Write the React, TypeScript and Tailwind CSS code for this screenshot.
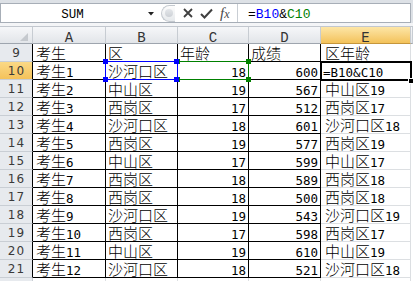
import clsx from 'clsx'

type Row = [number, string, string, string, string, string]

const rows: Row[] = [
  [9, '考生', '区', '年龄', '成绩', '区年龄'],
  [10, '考生1', '沙河口区', '18', '600', '=B10&C10'],
  [11, '考生2', '中山区', '19', '567', '中山区19'],
  [12, '考生3', '西岗区', '17', '512', '西岗区17'],
  [13, '考生4', '沙河口区', '18', '601', '沙河口区18'],
  [14, '考生5', '西岗区', '19', '577', '西岗区19'],
  [15, '考生6', '中山区', '17', '599', '中山区17'],
  [16, '考生7', '西岗区', '18', '589', '西岗区18'],
  [17, '考生8', '西岗区', '18', '500', '西岗区18'],
  [18, '考生9', '沙河口区', '19', '543', '沙河口区19'],
  [19, '考生10', '西岗区', '17', '598', '西岗区17'],
  [20, '考生11', '中山区', '19', '610', '中山区19'],
  [21, '考生12', '沙河口区', '18', '521', '沙河口区18'],
]

const CJK = /[\u3400-\u9fff]/

// chinese runs stay in the CJK font, digits/latin go mono so they are half width
function CellText({ text }: { text: string }) {
  const parts = text.match(/[\u3400-\u9fff]+|[^\u3400-\u9fff]+/g) ?? []
  return (
    <>
      {parts.map((p, i) =>
        CJK.test(p) ? (
          <span key={i} className="font-light">
            {p}
          </span>
        ) : (
          <span key={i} className="font-['DejaVu_Sans_Mono',monospace] text-[12.5px]">
            {p}
          </span>
        ),
      )}
    </>
  )
}

function FormulaBar() {
  return (
    <div className="bg-[#dde1e6]">
      <div className="h-[3px]" />
      <div className="mr-[2px] flex h-[20px] border border-[#a7aeb7] bg-white">
        <div className="relative w-[157px] shrink-0">
          <div className="w-[143px] text-center font-['Liberation_Mono',monospace] text-[12.5px] leading-[22px] text-black">
            SUM
          </div>
          <svg className="absolute left-[147px] top-[8px]" width="6" height="4" viewBox="0 0 6 4">
            <path d="M0 0h6L3 3.5z" fill="#222" />
          </svg>
        </div>
        <div className="ml-[3px] flex h-[17px] w-[14px] shrink-0 items-center justify-end self-center rounded-l-full border border-r-0 border-[#c4c9cf] bg-gradient-to-b from-[#fdfdfd] to-[#e6e9ec] pr-[2px]">
          <div className="h-[8px] w-[8px] rounded-full bg-gradient-to-b from-[#e4e7ea] to-[#cdd1d6]" />
        </div>
        <svg className="ml-[8px] self-center" width="10" height="10" viewBox="0 0 10 10">
          <path d="M1 1l8 8M9 1l-8 8" stroke="#3f3f3f" strokeWidth="1.8" />
        </svg>
        <svg className="ml-[7px] self-center" width="13" height="11" viewBox="0 0 13 11">
          <path d="M1 6l3.5 3.5L12 1.5" stroke="#3f3f3f" strokeWidth="2" fill="none" />
        </svg>
        <div className="ml-[7px] w-[17px] shrink-0 font-['Liberation_Serif',serif] text-[15px] italic leading-[19px] text-[#4a4a4a]">
          f<span className="text-[12px]">x</span>
        </div>
        <div className="w-px shrink-0 bg-[#c9ced4]" />
        <div className="flex-1 pl-[10px] font-['Liberation_Mono',monospace] text-[13px] leading-[21px] text-black">
          =<span className="text-[#0000ff]">B10</span>&amp;<span className="text-[#008000]">C10</span>
        </div>
      </div>
      <div className="h-[4px] border-b border-[#c2c7ce] bg-[#f4f5f7]" />
    </div>
  )
}

const headCell =
  "h-[17px] shrink-0 border-b border-r border-b-[#9ea5ae] border-r-[#c7ccd2] text-center font-['Liberation_Mono',monospace] text-[14px] leading-[22px] text-[#333]"
const grayHead = 'bg-gradient-to-b from-[#f6f7f9] to-[#e2e5e9]'

function HeaderRow() {
  return (
    <div className="flex h-[17px]">
      <div className={clsx(headCell, grayHead, 'flex w-[33px] items-end justify-end pb-[2px] pr-[4px]')}>
        <svg width="8" height="8" viewBox="0 0 8 8">
          <path d="M8 0v8H0z" fill="#c5c9ce" />
        </svg>
      </div>
      <div className={clsx(headCell, grayHead, 'w-[73px]')}>A</div>
      <div className={clsx(headCell, grayHead, 'w-[72px]')}>B</div>
      <div className={clsx(headCell, grayHead, 'w-[71px]')}>C</div>
      <div className={clsx(headCell, grayHead, 'w-[72px]')}>D</div>
      <div className={clsx(headCell, 'w-[90px] border-b-[#c5963c] bg-gradient-to-b from-[#fde6a6] to-[#f3c259]')}>E</div>
      <div className={clsx(headCell, grayHead, 'flex-1')} />
    </div>
  )
}

const cell = 'h-[18px] shrink-0 overflow-hidden whitespace-nowrap border-b border-r text-[15px] leading-[17px] text-black'

function DataRow({ row }: { row: Row }) {
  const [n, a, b, c, d, e] = row
  const isTitle = n === 9
  const isActive = n === 10
  return (
    <div className="flex h-[18px]">
      <div
        className={clsx(
          'flex h-[18px] w-[33px] shrink-0 items-center justify-center border-b border-r border-b-[#c9ced4] border-r-black pl-[1px] font-["DejaVu_Sans",sans-serif] text-[12px] tracking-[1px] text-[#3a3a3a]',
          isActive ? 'bg-gradient-to-b from-[#fbd985] to-[#f4c25a]' : 'bg-[#e7eaee]',
        )}
      >
        {n}
      </div>
      <div className={clsx(cell, 'w-[73px] border-black pl-[3px]')}>
        <CellText text={a} />
      </div>
      <div className={clsx(cell, 'w-[72px] border-black pl-[2px]')}>
        <CellText text={b} />
      </div>
      <div className={clsx(cell, 'w-[71px] border-black', isTitle ? 'pl-[2px]' : 'pr-[2px] text-right')}>
        <CellText text={c} />
      </div>
      <div className={clsx(cell, 'w-[72px] border-black', isTitle ? 'pl-[2px]' : 'pr-[2px] text-right')}>
        <CellText text={d} />
      </div>
      <div className={clsx(cell, 'w-[90px] border-[#dcdfe2]', isActive ? 'pl-[2px]' : 'pl-[4px]')}>
        <CellText text={e} />
      </div>
      <div className="h-[18px] flex-1 bg-white" />
    </div>
  )
}

function Handle({ className }: { className: string }) {
  return <div className={clsx('absolute h-[5px] w-[5px]', className)} />
}

function Sheet() {
  return (
    <div className="relative">
      <HeaderRow />
      {rows.map((r) => (
        <DataRow key={r[0]} row={r} />
      ))}
      <div className="flex h-[18px]">
        <div className="h-[18px] w-[33px] shrink-0 border-r border-[#c9ced4] bg-[#e7eaee]" />
        <div className="w-[73px] shrink-0 border-r border-[#dcdfe2]" />
        <div className="w-[72px] shrink-0 border-r border-[#dcdfe2]" />
        <div className="w-[71px] shrink-0 border-r border-[#dcdfe2]" />
        <div className="w-[72px] shrink-0 border-r border-[#dcdfe2]" />
        <div className="w-[90px] shrink-0 border-r border-[#dcdfe2]" />
      </div>

      {/* C10 reference (green) */}
      <div className="absolute left-[177px] top-[34px] h-[19px] w-[72px] border border-[#008000]" />
      <Handle className="left-[175px] top-[32px] bg-[#008000]" />
      <Handle className="left-[246px] top-[32px] bg-[#008000]" />
      <Handle className="left-[175px] top-[50px] bg-[#008000]" />
      <Handle className="left-[246px] top-[50px] bg-[#008000]" />

      {/* B10 reference (blue) */}
      <div className="absolute left-[105px] top-[34px] h-[19px] w-[73px] border border-[#0000ff]" />
      <Handle className="left-[103px] top-[32px] bg-[#0000ff]" />
      <Handle className="left-[174px] top-[32px] bg-[#0000ff]" />
      <Handle className="left-[103px] top-[50px] bg-[#0000ff]" />
      <Handle className="left-[174px] top-[50px] bg-[#0000ff]" />

      {/* active cell E10 */}
      <div className="absolute left-[320px] top-[34px] h-[20px] w-[92px] border-2 border-black" />
      <div className="absolute left-[408px] top-[51px] h-[6px] w-[6px] border border-white bg-black" />
    </div>
  )
}

export default function App() {
  return (
    <div className="h-[281px] w-[413px] overflow-hidden bg-white font-['Noto_Sans_CJK_SC',sans-serif]">
      <FormulaBar />
      <Sheet />
    </div>
  )
}
